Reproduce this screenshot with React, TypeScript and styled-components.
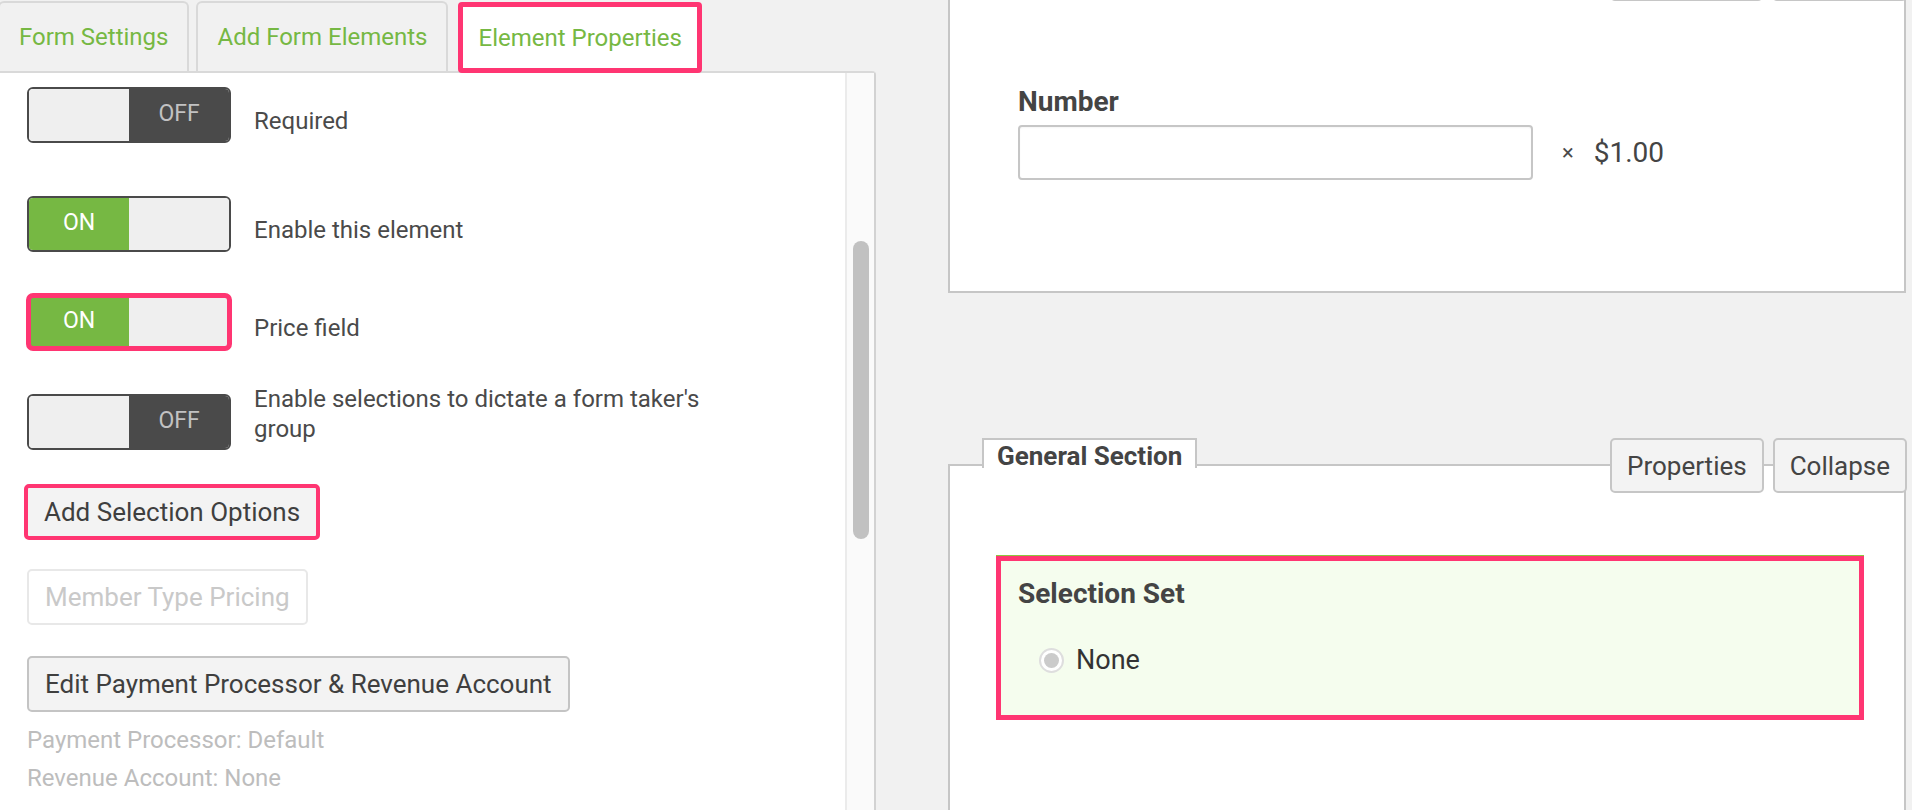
import React from "react";
import styled, { createGlobalStyle, css } from "styled-components";

const PINK = "#ff3572";
const GREEN = "#76b843";

const Global = createGlobalStyle`
  html, body { margin: 0; padding: 0; background: #f1f1f1; overflow: hidden; }
  body { font-family: Roboto, "Liberation Sans", Arial, sans-serif; color: #4a4a4a; }
  *, *::before, *::after { box-sizing: border-box; }
`;

const Page = styled.div`
  display: flex;
  width: 1912px;
  height: 810px;
  overflow: hidden;
  background: #f1f1f1;
`;

/* ---------- Left pane ---------- */

const LeftPane = styled.div`
  width: 876px;
  flex: none;
  display: flex;
  flex-direction: column;
`;

const TabBar = styled.div`
  display: flex;
  align-items: flex-end;
  gap: 7px;
  height: 71px;
  margin-left: -2px;
  position: relative;
  z-index: 1;
`;

const Tab = styled.div<{ $active?: boolean }>`
  height: 70px;
  padding: 0 19px;
  display: flex;
  align-items: center;
  font-size: 24px;
  color: ${GREEN};
  background: #f1f1f1;
  border: 2px solid #d9d9d9;
  border-bottom: none;
  border-radius: 6px 6px 0 0;
  white-space: nowrap;
  ${(p) =>
    p.$active &&
    css`
      height: 71px;
      margin-left: 3px;
      margin-bottom: -2px;
      padding: 0 15px;
      background: #fff;
      border: 5px solid ${PINK};
      border-radius: 4px;
    `}
`;

const Panel = styled.div`
  flex: 1;
  display: flex;
  min-height: 0;
  background: #fff;
  border-top: 2px solid #d9d9d9;
  border-right: 2px solid #d2d2d2;
  border-top-right-radius: 4px;
`;

const Content = styled.div`
  flex: 1;
  display: flex;
  flex-direction: column;
  align-items: flex-start;
  padding: 14px 0 0 27px;
`;

const ScrollTrack = styled.div`
  width: 29px;
  flex: none;
  background: #fafafa;
  border-left: 2px solid #ebebeb;
  padding: 168px 0 0 6px;
`;

const ScrollThumb = styled.div`
  width: 16px;
  height: 298px;
  border-radius: 8px;
  background: #c1c1c1;
`;

const ToggleRow = styled.div<{ $mt: number }>`
  display: flex;
  align-items: center;
  gap: 23px;
  margin-top: ${(p) => p.$mt}px;
`;

const Switch = styled.div<{ $highlight?: boolean }>`
  width: 204px;
  height: 56px;
  flex: none;
  display: flex;
  border: 2px solid #4a4a4a;
  border-radius: 6px;
  overflow: hidden;
  ${(p) =>
    p.$highlight &&
    css`
      outline: 5px solid ${PINK};
      outline-offset: -4px;
    `}
`;

const SwitchHalf = styled.span<{ $kind: "on" | "off" | "blank" }>`
  flex: 1;
  display: flex;
  align-items: center;
  justify-content: center;
  padding-bottom: 4px;
  font-size: 23px;
  color: ${(p) => (p.$kind === "on" ? "#fff" : "#c2c2c2")};
  background: ${(p) =>
    p.$kind === "on" ? GREEN : p.$kind === "off" ? "#4a4a4a" : "#efefef"};
`;

const ToggleLabel = styled.span<{ $nudge: number }>`
  font-size: 24px;
  line-height: 30px;
  color: #4a4a4a;
  max-width: 470px;
  margin-top: ${(p) => p.$nudge}px;
`;

const Button = styled.button<{ $mt: number; $highlight?: boolean; $disabled?: boolean }>`
  height: 56px;
  margin-top: ${(p) => p.$mt}px;
  padding: 0 16px;
  font-family: Roboto, "Liberation Sans", Arial, sans-serif;
  font-size: 26px;
  color: #3f3f3f;
  background: #f3f3f3;
  border: 2px solid #c4c4c4;
  border-radius: 5px;
  white-space: nowrap;
  cursor: pointer;
  ${(p) =>
    p.$disabled &&
    css`
      color: #c9c9c9;
      background: #fff;
      border-color: #e8e8e8;
      cursor: default;
    `}
  ${(p) =>
    p.$highlight &&
    css`
      margin-left: -3px;
      border: 4px solid ${PINK};
    `}
`;

const InfoList = styled.div`
  margin-top: 9px;
  font-size: 24px;
  line-height: 38px;
  color: #bdbdbd;
`;

/* ---------- Right column ---------- */

const RightCol = styled.div`
  flex: 1;
  display: flex;
  flex-direction: column;
  margin: 0 6px 0 72px;
`;

const Section = styled.section<{ $mt: number }>`
  display: flex;
  flex-direction: column;
  margin-top: ${(p) => p.$mt}px;
`;

const SectionHead = styled.div`
  display: flex;
  align-items: flex-start;
  height: 55px;
  margin-bottom: -29px;
  padding-left: 34px;
  position: relative;
  z-index: 1;
`;

const SectionTab = styled.div`
  height: 30px;
  padding: 4px 13px 0;
  display: flex;
  align-items: center;
  font-size: 26px;
  font-weight: 700;
  color: #444;
  background: #fff;
  border: 2px solid #c6c6c6;
  border-bottom: none;
`;

const HeadButtons = styled.div`
  margin-left: auto;
  margin-right: -1px;
  display: flex;
  gap: 9px;
`;

const HeadButton = styled.button<{ $w?: number }>`
  height: 55px;
  padding: 0 15px;
  font-family: Roboto, "Liberation Sans", Arial, sans-serif;
  font-size: 26px;
  color: #444;
  background: #f3f3f3;
  border: 2px solid #c6c6c6;
  border-radius: 5px;
  cursor: pointer;
  ${(p) => p.$w && css`width: ${p.$w}px;`}
`;

const SectionBody = styled.div<{ $pb: number; $grow?: boolean }>`
  background: #fff;
  border: 2px solid #c6c6c6;
  padding: 90px 40px ${(p) => p.$pb}px 46px;
  ${(p) => p.$grow && css`min-height: 600px;`}
`;

const FieldBox = styled.div<{ $highlight?: boolean }>`
  border: 5px solid transparent;
  padding: 16px 17px 16px 17px;
  ${(p) =>
    p.$highlight &&
    css`
      background: #f5fdee;
      border-color: ${PINK};
      box-shadow: 0 -1px 0 #8cc63f;
      padding-bottom: 35px;
    `}
`;

const FieldLabel = styled.div`
  font-size: 28px;
  line-height: 34px;
  font-weight: 700;
  color: #444;
`;

const InputRow = styled.div`
  display: flex;
  align-items: center;
  margin-top: 6px;
`;

const TextInput = styled.input`
  width: 515px;
  height: 55px;
  border: 2px solid #c6c6c6;
  border-radius: 4px;
  background: #fff;
  box-shadow: inset 0 1px 2px rgba(0, 0, 0, 0.04);
`;

const Times = styled.span`
  margin: 0 20px 0 29px;
  font-size: 22px;
  color: #4a4a4a;
`;

const Price = styled.span`
  font-size: 28px;
  color: #444;
`;

const RadioRow = styled.label`
  display: flex;
  align-items: center;
  gap: 12px;
  margin: 29px 0 0 21px;
  height: 40px;
  font-size: 27px;
  color: #333;
`;

const Radio = styled.span`
  width: 25px;
  height: 25px;
  border-radius: 50%;
  border: 2px solid #dedede;
  background: #fff;
  display: flex;
  align-items: center;
  justify-content: center;
  &::after {
    content: "";
    width: 15px;
    height: 15px;
    border-radius: 50%;
    background: #cbcbcb;
  }
`;

const toggles = [
  { label: "Required", on: false, mt: 0, nudge: 12 },
  { label: "Enable this element", on: true, mt: 53, nudge: 12 },
  { label: "Price field", on: true, mt: 42, nudge: 12, highlight: true },
  { label: "Enable selections to dictate a form taker's group", on: false, mt: 44, nudge: -16 },
];

export default function App() {
  return (
    <Page>
      <Global />
      <LeftPane>
        <TabBar>
          <Tab>Form Settings</Tab>
          <Tab>Add Form Elements</Tab>
          <Tab $active>Element Properties</Tab>
        </TabBar>
        <Panel>
          <Content>
            {toggles.map((t) => (
              <ToggleRow key={t.label} $mt={t.mt}>
                <Switch $highlight={t.highlight}>
                  {t.on ? (
                    <>
                      <SwitchHalf $kind="on">ON</SwitchHalf>
                      <SwitchHalf $kind="blank" />
                    </>
                  ) : (
                    <>
                      <SwitchHalf $kind="blank" />
                      <SwitchHalf $kind="off">OFF</SwitchHalf>
                    </>
                  )}
                </Switch>
                <ToggleLabel $nudge={t.nudge}>{t.label}</ToggleLabel>
              </ToggleRow>
            ))}
            <Button $mt={34} $highlight>
              Add Selection Options
            </Button>
            <Button $mt={29} $disabled>
              Member Type Pricing
            </Button>
            <Button $mt={31}>Edit Payment Processor &amp; Revenue Account</Button>
            <InfoList>
              <div>Payment Processor: Default</div>
              <div>Revenue Account: None</div>
            </InfoList>
          </Content>
          <ScrollTrack>
            <ScrollThumb />
          </ScrollTrack>
        </Panel>
      </LeftPane>

      <RightCol>
        <Section $mt={-54}>
          <SectionHead>
            <HeadButtons>
              <HeadButton $w={153} aria-label="Properties" />
              <HeadButton $w={135} aria-label="Collapse" />
            </HeadButtons>
          </SectionHead>
          <SectionBody $pb={90}>
            <FieldBox>
              <FieldLabel>Number</FieldLabel>
              <InputRow>
                <TextInput type="text" />
                <Times>×</Times>
                <Price>$1.00</Price>
              </InputRow>
            </FieldBox>
          </SectionBody>
        </Section>

        <Section $mt={145}>
          <SectionHead>
            <SectionTab>General Section</SectionTab>
            <HeadButtons>
              <HeadButton>Properties</HeadButton>
              <HeadButton>Collapse</HeadButton>
            </HeadButtons>
          </SectionHead>
          <SectionBody $pb={90} $grow>
            <FieldBox $highlight>
              <FieldLabel>Selection Set</FieldLabel>
              <RadioRow>
                <Radio />
                None
              </RadioRow>
            </FieldBox>
          </SectionBody>
        </Section>
      </RightCol>
    </Page>
  );
}
